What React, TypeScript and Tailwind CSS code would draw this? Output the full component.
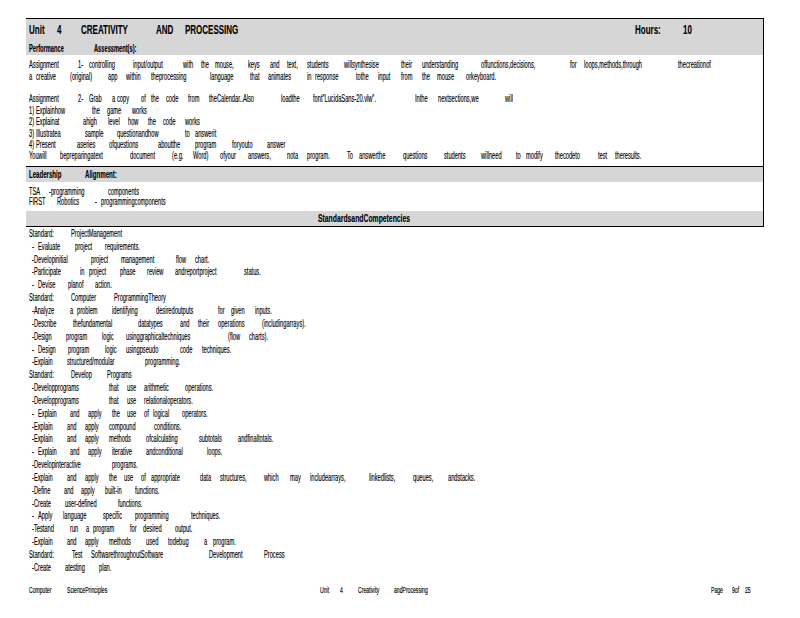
const assignments = [
  "29 Assignment|78 1-|89 controlling|133 input/output|183 with|201 the|215 mouse,|248 keys|270 and|287 text,|307 students|344 willsynthesise|401 their|422 understanding|481 offunctions,decisions,|570 for|584 loops,methods,through|678 thecreationof",
  "29 a|36 creative|70 (original)|108 app|126 within|151 theprocessing|210 language|250 that|268 animates|307 in|315 response|356 tothe|378 input|401 from|422 the|437 mouse|466 orkeyboard.",
  "",
  '29 Assignment|78 2-|89 Grab|112 a|117 copy|141 of|151 the|166 code|188 from|209 theCalendar..Also|281 loadthe|313 font"LucidaSans-20.vlw".|415 Inthe|438 nextsections,we|505 will',
  "29 1)|36 Explainhow|92 the|107 game|132 works",
  "29 2)|36 Explainat|83 ahigh|108 level|128 how|148 the|163 code|185 works",
  "29 3)|36 Illustratea|85 sample|117 questionandhow|185 to|195 answerit",
  "29 4)|36 Present|77 aseries|109 ofquestions|158 aboutthe|195 program|232 foryouto|267 answer",
  "29 Youwill|60 bepreparingatext|130 document|172 (e.g.|193 Word)|220 ofyour|248 answers,|287 nota|307 program.|347 To|359 answerthe|403 questions|444 students|481 willneed|516 to|526 modify|555 thecodeto|598 test|615 theresults.",
];

const leadership = [
  "29 TSA|49 -programming|108 components",
  "29 FIRST|57 Robotics|95 -|101 programmingcomponents",
];

const standards = [
  "29 Standard:|71 ProjectManagement",
  "32 -|38 Evaluate|75 project|105 requirements.",
  "32 -Developinitial|91 project|121 management|176 flow|195 chart.",
  "32 -Participate|80 in|89 project|120 phase|147 review|175 andreportproject|244 status.",
  "32 -|38 Devise|68 planof|95 action.",
  "29 Standard:|71 Computer|114 ProgrammingTheory",
  "32 -Analyze|70 a|77 problem|112 identifying|156 desiredoutputs|218 for|231 given|255 inputs.",
  "32 -Describe|73 thefundamental|138 datatypes|180 and|198 their|218 operations|262 (includingarrays).",
  "32 -Design|66 program|102 logic|126 usinggraphicaltechniques|228 (flow|249 charts).",
  "32 -|38 Design|68 program|105 logic|126 usingpseudo|180 code|202 techniques.",
  "32 -Explain|67 structured/modular|145 programming.",
  "29 Standard:|71 Develop|107 Programs",
  "32 -Developprograms|109 that|127 use|144 arithmetic|185 operations.",
  "32 -Developprograms|109 that|127 use|144 relationaloperators.",
  "32 -|38 Explain|70 and|88 apply|112 the|127 use|144 of|153 logical|182 operators.",
  "32 -Explain|67 and|85 apply|109 compound|154 conditions.",
  "32 -Explain|67 and|85 apply|109 methods|146 ofcalculating|199 subtotals|238 andfinaltotals.",
  "32 -|38 Explain|70 and|88 apply|112 iterative|146 andconditional|207 loops.",
  "32 -Developinteractive|112 programs.",
  "32 -Explain|67 and|85 apply|109 the|124 use|141 of|151 appropriate|200 data|220 structures,|264 which|290 may|310 includearrays,|369 linkedlists,|413 queues,|448 andstacks.",
  "32 -Define|64 and|81 apply|105 built-in|135 functions.",
  "32 -Create|65 user-defined|118 functions.",
  "32 -|38 Apply|63 language|103 specific|135 programming|191 techniques.",
  "32 -Testand|70 run|86 a|93 program|130 for|143 desired|175 output.",
  "32 -Explain|67 and|85 apply|109 methods|146 used|168 todebug|204 a|213 program.",
  "29 Standard:|72 Test|91 SoftwarethroughoutSoftware|209 Development|264 Process",
  "32 -Create|65 atesting|99 plan.",
];

// every word sits at the x it has in the page, so the odd gaps of the pdf stay
function Words({ line, squeeze }: { line: string; squeeze: string }) {
  const words = line
    ? line.split("|").map((w) => {
        const i = w.indexOf(" ");
        return { x: Number(w.slice(0, i)), text: w.slice(i + 1) };
      })
    : [];
  return (
    <>
      {words.map((w, i) => (
        <span
          key={i}
          className={`shrink-0 whitespace-pre origin-left ${squeeze}`}
          style={{
            marginLeft: i === 0 ? w.x - 26 : 0,
            width: i < words.length - 1 ? words[i + 1].x - w.x : undefined,
          }}
        >
          {w.text}
        </span>
      ))}
    </>
  );
}

function Row({
  line,
  className,
  squeeze = "scale-x-[.57]",
}: {
  line: string;
  className: string;
  squeeze?: string;
}) {
  return (
    <div className={`flex items-center ${className}`}>
      <Words line={line} squeeze={squeeze} />
    </div>
  );
}

export default function App() {
  return (
    <div className="w-[800px] h-[618px] overflow-hidden bg-white text-black font-['Liberation_Sans',sans-serif] [-webkit-text-stroke:0.15px_black]">
      <div className="ml-[26px] w-[738px] pt-[18px] text-[10px]">
        <div className="border-t border-r border-b border-black">
          <div className="bg-[#d6d6d6] h-[36px] font-bold">
            <Row
              line="29 Unit|57 4|81 CREATIVITY|156 AND|185 PROCESSING|635 Hours:|683 10"
              className="h-[22px] text-[13px]"
              squeeze="scale-x-[.615]"
            />
            <Row line="29 Performance|94 Assessment(s):" className="h-[14px]" />
          </div>
          <div className="pt-[4px] h-[112px] border-b border-black">
            {assignments.map((line, i) => (
              <Row key={i} line={line} className="h-[11.4px]" />
            ))}
          </div>
          <div className="bg-[#d6d6d6] h-[15px] font-bold">
            <Row
              line="29 Leadership|85 Alignment:"
              className="h-[15px] text-[10.5px]"
              squeeze="scale-x-[.58]"
            />
          </div>
          <div className="pt-[4px] h-[29px]">
            {leadership.map((line, i) => (
              <Row key={i} line={line} className="h-[10.5px]" />
            ))}
          </div>
          <div className="bg-[#d6d6d6] h-[15px] font-bold">
            <Row
              line="318 StandardsandCompetencies"
              className="h-[15px] text-[11px]"
              squeeze="scale-x-[.62]"
            />
          </div>
        </div>
        <div>
          {standards.map((line, i) => (
            <Row key={i} line={line} className="h-[12.85px]" />
          ))}
        </div>
        <Row
          line="29 Computer|67 SciencePrinciples|320 Unit|340 4|358 Creativity|394 andProcessing|711 Page|732 9of|745 25"
          className="mt-[11px] h-[12px] text-[8.5px]"
          squeeze="scale-x-[.6]"
        />
      </div>
    </div>
  );
}
